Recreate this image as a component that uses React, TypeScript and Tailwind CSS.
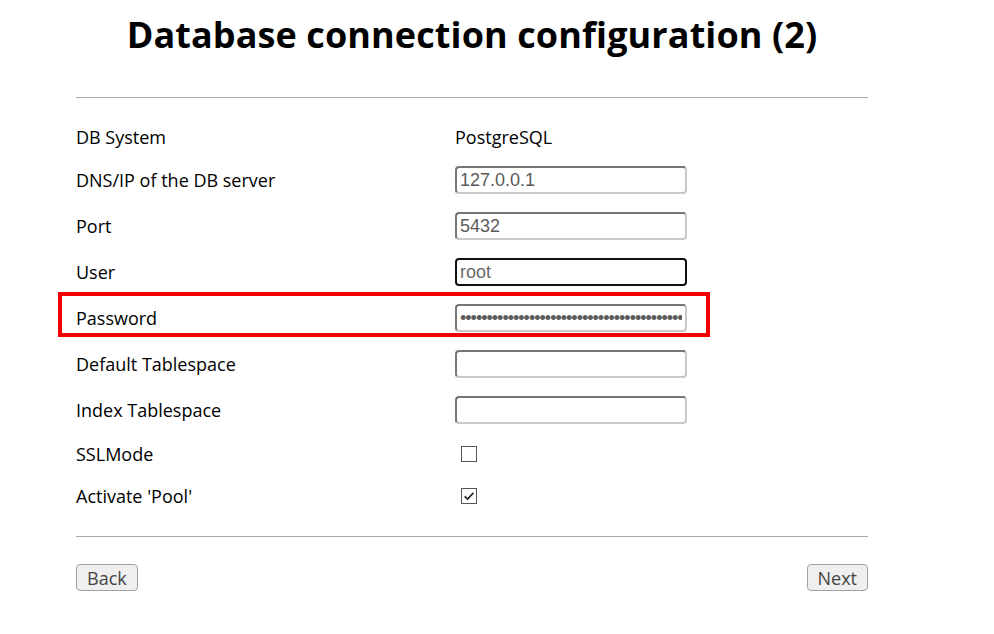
import { useState } from "react";

const field =
  "w-[232px] h-[28px] rounded-[4px] border-2 border-t-[#767676] border-l-[#767676] border-b-[#c8c8c8] border-r-[#c8c8c8] bg-white px-[3px] text-[18px] text-[#5a5a5a] outline-none font-['Liberation_Sans',Arial,sans-serif]";

const Row = ({ label, h, children }: { label: string; h: string; children?: any }) => (
  <div className={`flex items-center ${h}`}>
    <div className="w-[379px]">{label}</div>
    <div className="flex items-center">{children}</div>
  </div>
);

const Check = ({ on }: { on?: boolean }) => (
  <span className="ml-[6px] flex h-[16px] w-[16px] items-center justify-center border border-[#555] bg-white">
    {on && (
      <svg width="12" height="12" viewBox="0 0 11 11">
        <path d="M1.5 5.8 L4.2 8.4 L9.5 2.6" fill="none" stroke="#222" strokeWidth="1.5" />
      </svg>
    )}
  </span>
);

export default function App() {
  const [host, setHost] = useState("127.0.0.1");
  const [port, setPort] = useState("5432");
  const [user, setUser] = useState("root");

  return (
    <div className="min-h-[634px] w-[994px] bg-white font-['Open_Sans','Noto_Sans',sans-serif] text-[18px] text-black">
      <div className="ml-[76px] w-[792px]">
        <h1 className="pt-[9px] text-center text-[36px] font-bold leading-[52px] tracking-[0.1px]">
          Database connection configuration (2)
        </h1>
        <hr className="mt-[36px] border-t border-[#a8a8a8]" />

        <div className="pt-[19px]">
          <Row label="DB System" h="h-[40px]">
            <span>PostgreSQL</span>
          </Row>
          <Row label="DNS/IP of the DB server" h="h-[46px]">
            <input className={field} value={host} onChange={(e) => setHost(e.target.value)} />
          </Row>
          <Row label="Port" h="h-[46px]">
            <input className={field} value={port} onChange={(e) => setPort(e.target.value)} />
          </Row>
          <Row label="User" h="h-[46px]">
            <input
              className={`${field} !border-[#111] !text-[#6a6a6a]`}
              value={user}
              onChange={(e) => setUser(e.target.value)}
            />
          </Row>
          <div className="relative">
            <div className="absolute left-[-18px] top-[-3px] h-[45px] w-[652px] border-4 border-[#f00000]" />
            <Row label="Password" h="h-[46px]">
              <input
                type="password"
                className={`${field} text-[16px] tracking-[-1px]`}
                defaultValue="••••••••••••••••••••••••••••••••••••••••••••••"
              />
            </Row>
          </div>
          <Row label="Default Tablespace" h="h-[46px]">
            <input className={field} />
          </Row>
          <Row label="Index Tablespace" h="h-[46px]">
            <input className={field} />
          </Row>
          <Row label="SSLMode" h="h-[42px]">
            <Check />
          </Row>
          <Row label="Activate 'Pool'" h="h-[42px]">
            <Check on />
          </Row>
        </div>

        <hr className="mt-[19px] border-t border-[#a8a8a8]" />

        <div className="mt-[27px] flex justify-between">
          <button className="h-[27px] rounded-[4px] border border-[#a0a0a0] bg-[#efefef] px-[10px] text-[18px] leading-none text-[#444]">
            Back
          </button>
          <button className="h-[27px] rounded-[4px] border border-[#a0a0a0] bg-[#efefef] px-[10px] text-[18px] leading-none text-[#444]">
            Next
          </button>
        </div>
      </div>
    </div>
  );
}
